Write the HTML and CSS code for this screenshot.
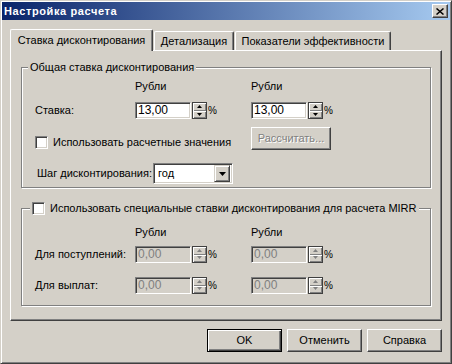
FILE: index.html
```html
<!DOCTYPE html>
<html lang="ru">
<head>
  <meta charset="UTF-8">
  <title>Настройка расчета</title>
  <link rel="stylesheet" href="styles.css">
</head>
<body>
  <div class="window">
    <div class="titlebar">
      <span class="title">Настройка расчета</span>
      <span class="close-btn">
        <svg width="8" height="7" viewBox="0 0 8 7"><path d="M0.5 0.5l7 6M7.5 0.5l-7 6" stroke="#000" stroke-width="1.5"/></svg>
      </span>
    </div>

    <div class="content">
      <div class="tabs">
        <div class="tab active">Ставка дисконтирования</div>
        <div class="tab tab-detail">Детализация</div>
        <div class="tab tab-eff">Показатели эффективности</div>
      </div>

      <div class="panel">
        <!-- Общая ставка -->
        <div class="group group-main">
          <div class="legend legend-main">Общая ставка дисконтирования</div>
          <div class="row row-head first">
            <span class="lbl"></span>
            <span class="col">Рубли</span>
            <span class="col">Рубли</span>
          </div>
          <div class="row row-input">
            <span class="lbl">Ставка:</span>
            <span class="col">
              <span class="edit">13,00</span>
              <span class="spin"><span class="spin-up"><svg width="5" height="3"><path d="M2.5 0L5 3H0z" fill="#000"/></svg></span><span class="spin-down"><svg width="5" height="3"><path d="M0 0h5L2.5 3z" fill="#000"/></svg></span></span>
              <span class="pct">%</span>
            </span>
            <span class="col">
              <span class="edit">13,00</span>
              <span class="spin"><span class="spin-up"><svg width="5" height="3"><path d="M2.5 0L5 3H0z" fill="#000"/></svg></span><span class="spin-down"><svg width="5" height="3"><path d="M0 0h5L2.5 3z" fill="#000"/></svg></span></span>
              <span class="pct">%</span>
            </span>
          </div>
          <div class="row row-check">
            <span class="check-wrap">
              <span class="checkbox"></span>
              <span>Использовать расчетные значения</span>
            </span>
            <span class="col">
              <span class="btn btn-calc disabled">Рассчитать...</span>
            </span>
          </div>
          <div class="row row-combo">
            <span class="combo-lbl">Шаг дисконтирования:</span>
            <span class="combo">
              <span class="combo-text">год</span>
              <span class="combo-btn"><svg width="7" height="4"><path d="M0 0h7L3.5 4z" fill="#000"/></svg></span>
            </span>
          </div>
        </div>

        <!-- MIRR -->
        <div class="group group-mirr">
          <div class="legend legend-mirr">
            <span class="checkbox"></span>
            <span>Использовать специальные ставки дисконтирования для расчета MIRR</span>
          </div>
          <div class="row row-head second">
            <span class="lbl"></span>
            <span class="col">Рубли</span>
            <span class="col">Рубли</span>
          </div>
          <div class="row row-input in-1">
            <span class="lbl">Для поступлений:</span>
            <span class="col">
              <span class="edit disabled">0,00</span>
              <span class="spin off"><span class="spin-up"><svg width="6" height="4"><path d="M2.5 0L5 3H0z" fill="#808080"/></svg></span><span class="spin-down"><svg width="6" height="4"><path d="M0 0h5L2.5 3z" fill="#808080"/></svg></span></span>
              <span class="pct">%</span>
            </span>
            <span class="col">
              <span class="edit disabled">0,00</span>
              <span class="spin off"><span class="spin-up"><svg width="6" height="4"><path d="M2.5 0L5 3H0z" fill="#808080"/></svg></span><span class="spin-down"><svg width="6" height="4"><path d="M0 0h5L2.5 3z" fill="#808080"/></svg></span></span>
              <span class="pct">%</span>
            </span>
          </div>
          <div class="row row-input in-2">
            <span class="lbl">Для выплат:</span>
            <span class="col">
              <span class="edit disabled">0,00</span>
              <span class="spin off"><span class="spin-up"><svg width="6" height="4"><path d="M2.5 0L5 3H0z" fill="#808080"/></svg></span><span class="spin-down"><svg width="6" height="4"><path d="M0 0h5L2.5 3z" fill="#808080"/></svg></span></span>
              <span class="pct">%</span>
            </span>
            <span class="col">
              <span class="edit disabled">0,00</span>
              <span class="spin off"><span class="spin-up"><svg width="6" height="4"><path d="M2.5 0L5 3H0z" fill="#808080"/></svg></span><span class="spin-down"><svg width="6" height="4"><path d="M0 0h5L2.5 3z" fill="#808080"/></svg></span></span>
              <span class="pct">%</span>
            </span>
          </div>
        </div>
      </div>

      <div class="buttons">
        <span class="btn btn-default">OK</span>
        <span class="btn">Отменить</span>
        <span class="btn">Справка</span>
      </div>
    </div>
  </div>
</body>
</html>
```

FILE: styles.css
```css
body {
  margin: 0;
  background-color: #d4d0c8;
  font-family: "Liberation Sans", Arial, sans-serif;
  font-size: 11px;
  line-height: 13px;
  color: #000;
}
.window {
  width: 452px;
  height: 364px;
  box-sizing: border-box;
  background-color: #d4d0c8;
  border: 1px solid;
  border-color: #d4d0c8 #404040 #404040 #d4d0c8;
  box-shadow: inset 1px 1px 0 #fff, inset -1px -1px 0 #808080;
  padding: 1px;
}
.titlebar {
  height: 18px;
  display: flex;
  align-items: center;
  justify-content: space-between;
  padding: 0 2px 0 2px;
  background: linear-gradient(to right, #0a246a, #a6caf0);
}
.title {
  color: #fff;
  font-weight: bold;
  font-size: 11px;
  letter-spacing: 0.6px;
}
.close-btn {
  width: 16px;
  height: 14px;
  box-sizing: border-box;
  display: flex;
  align-items: center;
  justify-content: center;
  background-color: #d4d0c8;
  border: 1px solid;
  border-color: #fff #404040 #404040 #fff;
  box-shadow: inset -1px -1px 0 #808080;
}
.content {
  padding: 9px 8px 0 8px;
}

/* onglets */
.tabs {
  display: flex;
  align-items: flex-end;
  height: 21px;
}
.tab {
  box-sizing: border-box;
  height: 19px;
  display: flex;
  align-items: center;
  justify-content: center;
  border-top: 1px solid #fff;
  border-left: 1px solid #fff;
  border-right: 1px solid #404040;
  border-radius: 2px 2px 0 0;
  box-shadow: inset -1px 0 0 #808080;
}
.tab.active {
  position: relative;
  z-index: 1;
  width: 143px;
  height: 22px;
  margin-bottom: -1px;
  padding-bottom: 1px;
  background-color: #d4d0c8;
}
.tab-detail {
  width: 80px;
  margin-left: 1px;
}
.tab-eff {
  width: 156px;
  margin-left: 1px;
}
.panel {
  height: 271px;
  box-sizing: border-box;
  border: 1px solid;
  border-color: #fff #404040 #404040 #fff;
  box-shadow: inset -1px -1px 0 #808080;
  padding-top: 1px;
}

/* cadres */
.group {
  box-sizing: border-box;
  margin: 15px 10px 0 10px;
  padding-left: 13px;
  border: 1px solid #808080;
  box-shadow: inset 1px 1px 0 #fff, 1px 1px 0 #fff;
  display: flex;
  flex-direction: column;
}
.group-main {
  height: 121px;
}
.group-mirr {
  height: 98px;
  margin-top: 20px;
}
.legend {
  align-self: flex-start;
  display: flex;
  align-items: center;
  height: 13px;
  margin-top: -7px;
  padding: 0 2px;
  background-color: #d4d0c8;
}
.legend-main {
  margin-left: -7px;
}
.legend-mirr {
  margin-left: -5px;
  gap: 5px;
}
.row {
  display: flex;
  align-items: center;
}
.lbl {
  width: 100px;
}
.col {
  width: 116px;
  display: flex;
  align-items: center;
}
.row-head {
  height: 13px;
}
.row-head.first {
  margin-top: 6px;
}
.row-head.second {
  margin-top: 11px;
}
.row-input {
  height: 17px;
  margin-top: 9px;
}
.row-input.in-1 {
  margin-top: 7px;
}
.row-input.in-2 {
  margin-top: 14px;
}
.row-check {
  height: 23px;
  margin-top: 8px;
  align-items: flex-start;
}
.check-wrap {
  width: 216px;
  display: flex;
  align-items: center;
  gap: 5px;
  margin-top: 9px;
}
.row-combo {
  height: 21px;
  margin-top: 13px;
  padding-left: 2px;
}
.combo-lbl {
  width: 116px;
}

/* contrôles */
.edit {
  width: 56px;
  height: 17px;
  box-sizing: border-box;
  padding-left: 2px;
  background-color: #fff;
  border: 1px solid;
  border-color: #808080 #fff #fff #808080;
  box-shadow: inset 1px 1px 0 #404040, inset -1px -1px 0 #d4d0c8;
  font-size: 12px;
  line-height: 15px;
}
.edit.disabled {
  background-color: #d4d0c8;
  color: #808080;
}
.spin {
  width: 15px;
  height: 17px;
  box-sizing: border-box;
  margin-left: 1px;
  border: 1px solid #404040;
  display: flex;
  flex-direction: column;
}
.spin-up, .spin-down {
  flex: 1;
  display: flex;
  align-items: center;
  justify-content: center;
  box-shadow: inset 1px 1px 0 #fff, inset -1px -1px 0 #808080;
}
.spin svg {
  display: block;
}
.pct {
  margin-left: 1px;
  font-size: 10px;
}
.checkbox {
  width: 13px;
  height: 13px;
  box-sizing: border-box;
  background-color: #fff;
  border: 1px solid;
  border-color: #808080 #fff #fff #808080;
  box-shadow: inset 1px 1px 0 #404040, inset -1px -1px 0 #d4d0c8;
  flex-shrink: 0;
}
.combo {
  width: 80px;
  height: 21px;
  box-sizing: border-box;
  display: flex;
  align-items: center;
  justify-content: space-between;
  background-color: #fff;
  border: 1px solid;
  border-color: #808080 #fff #fff #808080;
  box-shadow: inset 1px 1px 0 #404040, inset -1px -1px 0 #d4d0c8;
  padding: 2px 2px 2px 4px;
}
.combo-btn {
  width: 16px;
  height: 17px;
  box-sizing: border-box;
  display: flex;
  align-items: center;
  justify-content: center;
  background-color: #d4d0c8;
  border: 1px solid;
  border-color: #d4d0c8 #404040 #404040 #d4d0c8;
  box-shadow: inset 1px 1px 0 #fff, inset -1px -1px 0 #808080;
}
.btn {
  width: 75px;
  height: 23px;
  box-sizing: border-box;
  display: flex;
  align-items: center;
  justify-content: center;
  background-color: #d4d0c8;
  border: 1px solid;
  border-color: #fff #404040 #404040 #fff;
  box-shadow: inset -1px -1px 0 #808080;
}
.btn-calc {
  width: 80px;
}
.btn.disabled {
  color: #808080;
  text-shadow: 1px 1px 0 #fff;
}
.btn-default {
  border-color: #000;
  box-shadow: inset 1px 1px 0 #fff, inset -1px -1px 0 #404040, inset -2px -2px 0 #808080;
}
.buttons {
  display: flex;
  justify-content: flex-end;
  gap: 5px;
  margin-top: 8px;
}
```
